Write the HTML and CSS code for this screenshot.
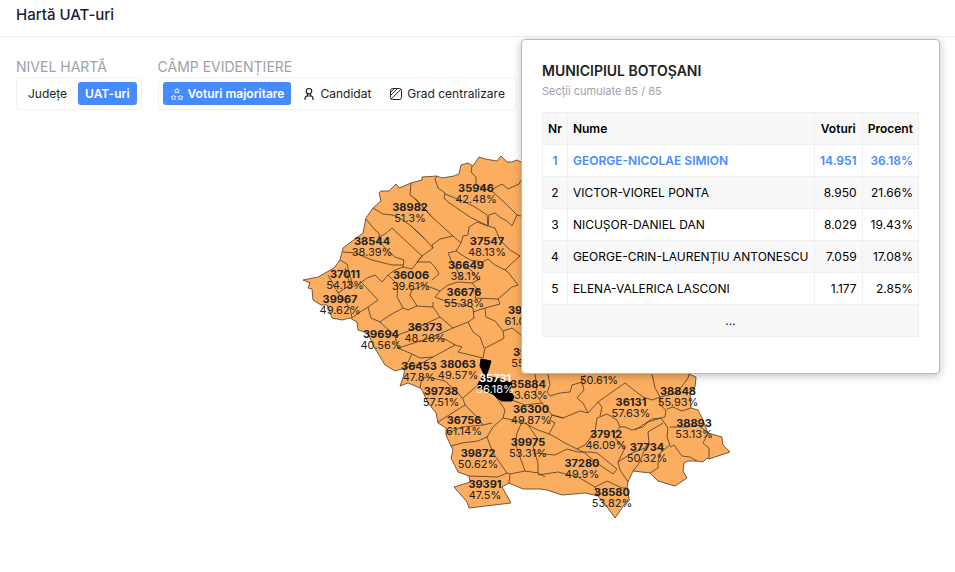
FILE: index.html
```
<!DOCTYPE html>
<html lang="ro">
<head>
<meta charset="utf-8">
<title>Hartă UAT-uri</title>
<link rel="stylesheet" href="styles.css">
</head>
<body>
<header class="page-header"><h1>Hartă UAT-uri</h1></header>
<main class="content">
  <div class="filters">
    <section class="filter">
      <h2 class="filter-label">NIVEL HARTĂ</h2>
      <div class="segmented">
        <button class="segment" type="button">Județe</button>
        <button class="segment active" type="button">UAT-uri</button>
      </div>
    </section>
    <section class="filter">
      <h2 class="filter-label">CÂMP EVIDENȚIERE</h2>
      <div class="segmented">
        <button class="segment active" type="button">
          <svg class="icon stars" viewBox="0 0 14 14"><path d="M7 1.400l.8 1.500 1.700.2-1.200 1.200.3 1.700L7 5.200 5.400 6l.3-1.700-1.200-1.200 1.700-.2zM3.500 8l.8 1.500 1.700.2-1.200 1.200.3 1.700-1.600-.8-1.600.8.3-1.700L1 9.700l1.700-.2zM10.500 8l.8 1.500 1.700.2-1.200 1.200.3 1.700-1.600-.8-1.600.8.3-1.700L8 9.700l1.700-.2z"/></svg>
          Voturi majoritare
        </button>
        <button class="segment" type="button">
          <svg class="icon person" viewBox="0 0 14 14"><circle cx="7" cy="4.200" r="2.700"/><path d="M3 13v-1.500A2.500 2.500 0 0 1 5.500 9h3a2.500 2.500 0 0 1 2.500 2.500V13M5 9l.8-2.200M9 9l-.8-2.200"/></svg>
          Candidat
        </button>
        <button class="segment" type="button">
          <svg class="icon" viewBox="0 0 14 14"><rect x="1.500" y="1.500" width="11" height="11" rx="2.200"/><path d="M1.500 5.500l4-4M1.500 8.500l7-7M2 12.200L12.200 2"/></svg>
          Grad centralizare
        </button>
      </div>
    </section>
  </div>
  <svg class="map" viewBox="0 0 923 414" role="img" aria-label="Hartă UAT-uri">
    <g transform="translate(-16 -126)">
      <path class="land" d="M303 280L318 277 334 268 340 260 343 248 363 233 366 218 373 208 381 201 379 193 381 191 389 191 396 184 399 188 411 183 422 180 422 177 437 176 442 178 454 176 459 174 461 165 468 163 473 166 479 157 485 159 497 161 501 156 507 162 512 162 517 160 521 162 600 200 680 300 689 374 696 377 695 387 690 393 691 408 698 410 702 418 708 433 722 437 723 445 730 452 709 459 707 458 703 462 697 461 688 461 684 463 683 471 687 478 675 486 658 481 650 473 633 471 628 482 627 488 629 498 622 508 615 518 607 507 598 496 585 493 562 495 547 490 540 489 523 489 509 483 502 487 511 503 469 508 467 502 454 487 470 482 469 476 458 472 451 458 453 450 451 446 446 435 446 428 438 423 436 413 428 403 422 390 420 388 408 383 400 386 403 378 405 368 395 371 385 365 373 345 368 333 358 330 357 322 350 318 342 320 332 318 327 305 321 305 313 300 312 289 308 288 310 283Z"/>
      <path class="border" d="M373 208L383 214 392 215 398 217 410 225 425 239M366 219L375 230 379 233 379 242 395 257 404 260 403 267 412 269 422 256 408 243 392 228 385 234 379 237M343 252L355 253 372 260 392 265 403 265M340 260L347 264 349 273 353 285M411 183L410 195 417 200 423 207 432 217M437 176L435 179 438 188 445 193 444 198 448 202 470 217 488 226M445 194L465 202 475 207 487 215 488 226M472 166L471 172 476 177 476 185 493 192 505 203 517 215 521 216M493 189L502 184 508 189 519 184 521 180M488 226L489 215 495 213 501 218 507 221 512 226 517 215M415 199L432 217 453 236 461 243M461 243L463 236 468 235 469 227 477 222 488 226 495 228 500 240 510 250 520 256M461 243L456 251 448 253 452 262 457 270 462 280M410 225L423 237 433 248 422 256M433 248L432 245 440 239 453 236M456 251L465 257 470 260 483 262 488 259 495 265 505 270 510 265 520 256M422 256L417 262 430 262 435 267 439 274 432 280"/>
      <path class="border" d="M328 275L338 293 350 285 345 268M338 293L350 308 352 318M348 288L358 285 367 278 375 275 382 282 388 275 395 270 403 267M362 283L378 300 368 307 357 314 352 318M388 275L398 285 397 297 403 308 390 315 380 322 371 318 368 307M403 308L408 310 417 306 433 307M417 306L410 295 412 290 425 285 440 291M380 322L395 336 417 328 440 317M395 336L398 348 430 338 453 328M398 348L412 354 405 368M412 354L420 358 433 357M433 302L433 307 440 317 453 328 468 322 474 318 473 308 465 305 448 302 435 297 440 291 448 285 458 282 472 283 478 280 472 271 465 266M472 283L478 290 475 298 498 299 512 287 518 285 508 272 505 270M473 312L485 308 500 304 498 299M485 308L486 317 495 321 503 331 512 328 521 335M503 331L504 338 497 342 485 348 483 358M468 322L473 332 480 337 484 348M430 338L445 339 455 345 462 347 458 352 483 358M455 345L433 357 420 364 405 368M420 388L422 378 428 377 445 381 458 393 463 399 465 405 478 418 483 425 492 423"/>
      <path class="border" d="M463 398L478 385M438 422L465 405M446 434L462 427 483 425M497 398L505 410 503 418 493 427 487 437M451 446L462 443 478 441 487 437 493 453 507 473 498 477 469 476M507 473L510 474 509 483M510 474L525 471 538 473 545 477M503 418L522 422 517 433 515 443 525 471M522 422L528 425 537 438 533 447 538 463 538 473M528 425L538 430 549 434M512 400L525 405 542 403M535 374L537 388 535 393 542 403 552 415 563 418 580 411 588 413 598 402 612 392 625 383 643 397M548 374L550 385 547 392 550 396 560 393 570 392 572 385 582 382 585 375M582 382L584 390 577 398 583 403 588 413M563 418L552 415 550 420 555 423 549 434 555 437 565 443 577 449 585 445 595 432 597 418 607 414 617 420 620 427 625 427 632 430 643 427 648 422 661 418M598 402L602 407 600 416M533 453L555 455 567 449 578 452 590 452 597 453 617 469 613 474 603 467 595 462 585 453 577 449M538 475L558 472 578 477 595 487 607 481 622 488 627 488M595 487L598 496M620 427L613 435 618 442 625 448 618 462 620 470 628 482M618 462L632 453 645 448M652 374L655 388 660 397 652 400 643 397M660 397L677 393 688 378 689 374M660 397L660 405 666 410 665 417 661 418 652 419 635 430M667 409L673 407 682 411 691 408M661 418L668 428 667 437 670 445 660 453 658 462 658 468 650 473M663 423L648 432 649 442 645 448 640 462 633 471M670 447L674 445 682 456 690 457 697 461M670 427L688 427 698 425 708 433 703 443 709 448 709 459"/>
      <g class="labels">
        <text x="476" y="192"><tspan class="code">35946</tspan><tspan x="476" dy="11">42.48%</tspan></text>
        <text x="410" y="211"><tspan class="code">38982</tspan><tspan x="410" dy="11">51.3%</tspan></text>
        <text x="372" y="245"><tspan class="code">38544</tspan><tspan x="372" dy="11">38.39%</tspan></text>
        <text x="487" y="245"><tspan class="code">37547</tspan><tspan x="487" dy="11">48.13%</tspan></text>
        <text x="345" y="278"><tspan class="code">37011</tspan><tspan x="345" dy="11">54.13%</tspan></text>
        <text x="411" y="279"><tspan class="code">36006</tspan><tspan x="411" dy="11">39.61%</tspan></text>
        <text x="466" y="269"><tspan class="code">36649</tspan><tspan x="466" dy="11">38.1%</tspan></text>
        <text x="340" y="303"><tspan class="code">39967</tspan><tspan x="340" dy="11">49.62%</tspan></text>
        <text x="464" y="296"><tspan class="code">36676</tspan><tspan x="464" dy="11">55.38%</tspan></text>
        <text x="515" y="314"><tspan class="code">39</tspan><tspan x="515" dy="11">61.0</tspan></text>
        <text x="381" y="338"><tspan class="code">39694</tspan><tspan x="381" dy="11">40.56%</tspan></text>
        <text x="425" y="331"><tspan class="code">36373</tspan><tspan x="425" dy="11">48.26%</tspan></text>
        <text x="520" y="356"><tspan class="code">39</tspan><tspan x="518" dy="11">55</tspan></text>
        <text x="419" y="370"><tspan class="code">36453</tspan><tspan x="419" dy="11">47.8%</tspan></text>
        <text x="458" y="368"><tspan class="code">38063</tspan><tspan x="458" dy="11">49.57%</tspan></text>
        <text x="528" y="388"><tspan class="code">35884</tspan><tspan x="531" dy="11">3.63%</tspan></text>
        <text x="599" y="373"><tspan x="599" dy="11">50.61%</tspan></text>
        <text x="441" y="395"><tspan class="code">39738</tspan><tspan x="441" dy="11">57.51%</tspan></text>
        <text x="464" y="424"><tspan class="code">36756</tspan><tspan x="464" dy="11">61.14%</tspan></text>
        <text x="531" y="413"><tspan class="code">36300</tspan><tspan x="531" dy="11">49.87%</tspan></text>
        <text x="631" y="406"><tspan class="code">36131</tspan><tspan x="631" dy="11">57.63%</tspan></text>
        <text x="678" y="395"><tspan class="code">38848</tspan><tspan x="678" dy="11">55.93%</tspan></text>
        <text x="694" y="427"><tspan class="code">38893</tspan><tspan x="694" dy="11">53.13%</tspan></text>
        <text x="606" y="438"><tspan class="code">37912</tspan><tspan x="606" dy="11">46.09%</tspan></text>
        <text x="647" y="451"><tspan class="code">37734</tspan><tspan x="647" dy="11">50.32%</tspan></text>
        <text x="582" y="467"><tspan class="code">37280</tspan><tspan x="582" dy="11">49.9%</tspan></text>
        <text x="612" y="496"><tspan class="code">38580</tspan><tspan x="612" dy="11">53.82%</tspan></text>
        <text x="528" y="446"><tspan class="code">39975</tspan><tspan x="528" dy="11">53.31%</tspan></text>
        <text x="478" y="457"><tspan class="code">39872</tspan><tspan x="478" dy="11">50.62%</tspan></text>
        <text x="485" y="488"><tspan class="code">39391</tspan><tspan x="485" dy="11">47.5%</tspan></text>
      </g>
      <path class="selected" d="M481 359L491 361 489 368 486 376 500 379 512 383 510 390 514 397 512 401 502 401 497 398 493 394 478 388 478 384 484 374 480 366Z"/>
      <text class="labels selected-label" x="495" y="382"><tspan class="code">35731</tspan><tspan x="495" dy="11">36.18%</tspan></text>
    </g>
  </svg>
</main>
<aside class="tooltip">
  <h3>MUNICIPIUL BOTOŞANI</h3>
  <p>Secții cumulate 85 / 85</p>
  <table>
    <thead><tr><th class="rank">Nr</th><th>Nume</th><th class="votes">Voturi</th><th class="votes">Procent</th></tr></thead>
    <tbody>
      <tr class="leader"><td class="rank">1</td><td>GEORGE-NICOLAE SIMION</td><td class="num">14.951</td><td class="num">36.18%</td></tr>
      <tr><td class="rank">2</td><td>VICTOR-VIOREL PONTA</td><td class="num">8.950</td><td class="num">21.66%</td></tr>
      <tr><td class="rank">3</td><td>NICUȘOR-DANIEL DAN</td><td class="num">8.029</td><td class="num">19.43%</td></tr>
      <tr><td class="rank">4</td><td>GEORGE-CRIN-LAURENȚIU ANTONESCU</td><td class="num">7.059</td><td class="num">17.08%</td></tr>
      <tr><td class="rank">5</td><td>ELENA-VALERICA LASCONI</td><td class="num">1.177</td><td class="num">2.85%</td></tr>
      <tr><td class="rank" colspan="4">...</td></tr>
    </tbody>
  </table>
</aside>
</body>
</html>
```
FILE: styles.css
```
* { box-sizing: border-box; }
body { margin: 0; background: #fff; color: #222; font-family: Inter, "Liberation Sans", sans-serif; overflow: hidden; }
h1, h2, h3, p { margin: 0; }
.page-header { height: 37px; padding: 4px 16px 0; border-bottom: 1px solid #f0f0f0; }
.page-header h1 { font-size: 15px; line-height: 22px; font-weight: 500; color: #1b1b36; }
.content { padding: 20px 16px 0; }
.filters { display: flex; gap: 16px; }
.filter-label { font-size: 14px; line-height: 20px; font-weight: 400; color: #a0a0a8; white-space: nowrap; }
.segmented { display: inline-flex; gap: 4px; height: 33px; padding: 4px; border: 1px solid #f0f2f4; border-radius: 4px; }
.segment { display: flex; align-items: center; gap: 4px; height: 23px; padding: 0 7px; border: 0; border-radius: 3px; background: transparent; color: #222; font: 400 12px/22px Inter, "Liberation Sans", sans-serif; white-space: nowrap; }
.segment.active { background: #468bff; color: #fff; font-weight: 600; }
.icon { width: 14px; height: 14px; fill: none; stroke: currentColor; stroke-width: 1; }
.icon.stars { stroke-width: .8; }
.icon.person { stroke-width: 1.2; }
.map { display: block; width: 100%; margin-top: 16px; }
.land { fill: #fcae60; stroke: #4d3822; stroke-width: .8; stroke-linejoin: round; }
.border { fill: none; stroke: #4d3822; stroke-width: .8; stroke-linejoin: round; }
.selected { fill: #000; stroke: #000; }
.labels { font-size: 11px; text-anchor: middle; fill: #222; }
.code { font-weight: 700; }
.selected-label { fill: #fff; }
.tooltip { position: absolute; top: 39px; right: 15px; width: 419px; padding: 20px 20px 36px; background: #fff; border: 1px solid #f3ac61; border-radius: 4px; box-shadow: 0 2px 8px rgba(0, 0, 0, .25); }
.tooltip h3 { font-size: 14px; line-height: 22px; font-weight: 600; color: #222; }
.tooltip p { font-size: 11px; line-height: 18px; color: #a0a0a8; }
table { width: 100%; margin-top: 12px; border-collapse: collapse; font-size: 12px; line-height: 19px; color: #000; }
th, td { padding: 6px 5px; border: 1px solid #f0f0f0; text-align: left; white-space: nowrap; }
th { font-weight: 600; background: #f8f8f8; }
tbody tr:nth-child(even) { background: #f8f8f8; }
.rank, .votes { text-align: center; }
.num { text-align: right; }
.leader { color: #468bff; font-weight: 600; }
```
